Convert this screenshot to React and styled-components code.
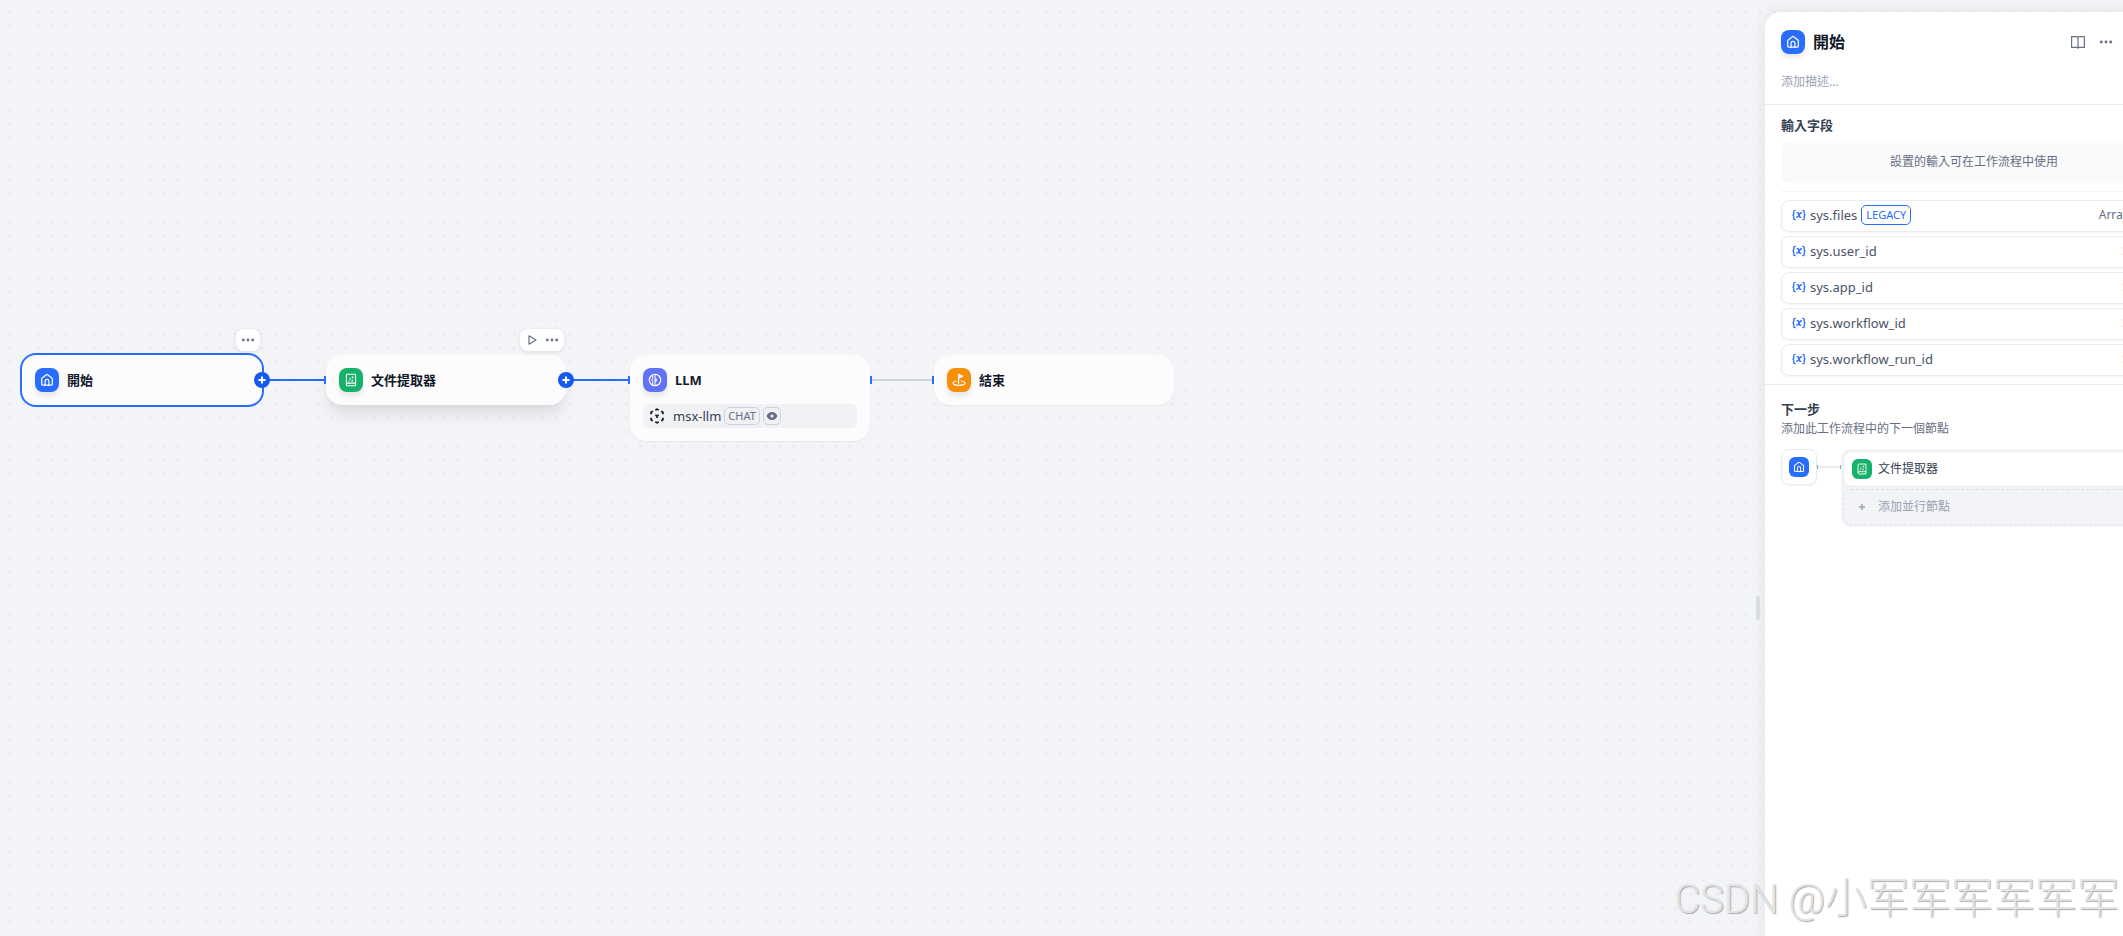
import React from 'react';
import styled, { createGlobalStyle, css } from 'styled-components';

const color = {
	canvas: '#f2f4f7',
	dot: '#e4e6eb',
	card: '#fcfcfd',
	blue: '#296dff',
	blueDark: '#155aef',
	green: '#17b26a',
	indigo: '#6172f3',
	orange: '#f79009',
	title: '#101828',
	secondary: '#354052',
	text: '#495464',
	muted: '#676f83',
	faint: '#98a2b2',
	line: '#e9ebf0',
};

const nodes = [
	{ id: 'start', name: '開始', icon: 'home', tone: color.blue, x: 20, y: 353, selected: true, menu: true, next: 'active' },
	{ id: 'doc', name: '文件提取器', icon: 'doc', tone: color.green, x: 326, y: 355, raised: true, menu: true, run: true, target: true, next: 'active' },
	{ id: 'llm', name: 'LLM', icon: 'llm', tone: color.indigo, x: 630, y: 355, model: 'msx-llm', target: true, next: 'idle' },
	{ id: 'end', name: '結束', icon: 'end', tone: color.orange, x: 934, y: 355, target: true },
];

const variables = [
	{ name: 'sys.files', type: 'Array[File]', legacy: true },
	{ name: 'sys.user_id', type: 'String' },
	{ name: 'sys.app_id', type: 'String' },
	{ name: 'sys.workflow_id', type: 'String' },
	{ name: 'sys.workflow_run_id', type: 'String' },
];

const HomeIcon = () => (
	<svg viewBox='0 0 14 14' fill='none' stroke='#fff' strokeWidth='1.2' strokeLinejoin='round' strokeLinecap='round'>
		<path d='M5.2 12.2H2.6a.9.9 0 0 1-.9-.9V5.8c0-.3.1-.6.4-.8L6.4 1.7a1 1 0 0 1 1.2 0L11.9 5c.3.2.4.5.4.8v5.5a.9.9 0 0 1-.9.9H8.8' />
		<path d='M5.1 12.2V8.3a1.9 1.9 0 0 1 3.8 0v3.9z' />
	</svg>
);

const DocIcon = () => (
	<svg viewBox='0 0 14 14' fill='none' stroke='#fff' strokeWidth='1.1' strokeLinejoin='round'>
		<path d='M2.4 11.5V2.4c0-.7.5-1.2 1.2-1.2h8v11.6H3.8c-.8 0-1.4-.6-1.4-1.300s.6-1.400 1.400-1.400h7.800' />
		<path d='M8.600 2.700l.5 1.100 1.100.5-1.100.5-.5 1.100-.5-1.100-1.100-.5 1.100-.5z' fill='#fff' stroke='none' />
		<circle cx='6' cy='5.800' r='.8' fill='#fff' stroke='none' />
		<circle cx='5' cy='7.900' r='.7' fill='#fff' stroke='none' />
		<circle cx='8.200' cy='7.700' r='.9' fill='#fff' stroke='none' />
	</svg>
);

const LlmIcon = () => (
	<svg viewBox='0 0 14 14' fill='none' stroke='#fff' strokeWidth='1.2' strokeLinejoin='round' strokeLinecap='round'>
		<circle cx='7' cy='7' r='5.700' />
		<path d='M7 2.300v9.400M4.700 3.200v2.300L3.900 7l.8 1.500v2.300' strokeWidth='1' />
		<path d='M7.200 5l2.300 1.200L8.500 7l1 .9-2.300 1.200z' fill='#fff' stroke='none' />
	</svg>
);

const EndIcon = () => (
	<svg viewBox='0 0 14 14' fill='none' stroke='#fff' strokeWidth='1.2' strokeLinejoin='round' strokeLinecap='round'>
		<path d='M6.600 10.300V1.300l4 1.900-4 2' />
		<path d='M7.200 1.800v3L10 3.300z' fill='#fff' stroke='none' />
		<path d='M4.700 8C2.600 8.300 1.100 9.100 1.100 10.100c0 1.300 2.600 2.300 5.900 2.300s5.900-1 5.900-2.300c0-1-1.500-1.800-3.800-2.100' />
	</svg>
);

const DotsIcon = () => (
	<svg width='16' height='16' viewBox='0 0 16 16' fill='currentColor'>
		<circle cx='3.300' cy='8' r='1.400' />
		<circle cx='8' cy='8' r='1.400' />
		<circle cx='12.700' cy='8' r='1.400' />
	</svg>
);

const PlayIcon = () => (
	<svg width='16' height='16' viewBox='0 0 16 16' fill='none' stroke='currentColor' strokeWidth='1.200' strokeLinejoin='round'>
		<path d='M5 3.800l7 4.200-7 4.200z' />
	</svg>
);

const PlusIcon = ({ size = 16, width = 2 }) => (
	<svg width={size} height={size} viewBox='0 0 16 16' fill='none' stroke='currentColor' strokeWidth={width}>
		<path d='M8 4.500v7M4.500 8h7' />
	</svg>
);

const BookIcon = () => (
	<svg width='16' height='16' viewBox='0 0 16 16' fill='none' stroke='currentColor' strokeWidth='1.200' strokeLinejoin='round'>
		<path d='M8 14.700V13.300H1.600V2.600H6.500C7.300 2.600 8 3.200 8 4v9.300h6.400V2.600H9.500C8.700 2.600 8 3.200 8 4' />
	</svg>
);

const VariableIcon = () => (
	<svg width='14' height='14' viewBox='0 0 14 14' fill='none' stroke='currentColor' strokeWidth='1.300' strokeLinecap='round' strokeLinejoin='round'>
		<path d='M3.200 2.300c-1 0-1.400.4-1.400 1.300v1.900c0 .8-.3 1.300-1 1.500.7.2 1 .7 1 1.500v1.900c0 .9.4 1.300 1.400 1.300M10.800 2.300c1 0 1.400.4 1.400 1.300v1.900c0 .8.3 1.300 1 1.500-.7.2-1 .7-1 1.500v1.900c0 .9-.4 1.300-1.400 1.300' />
		<path d='M5.200 4.700c1.300-.3 1.500.7 1.800 2.300s.6 2.600 1.700 2.300M9.400 4.700C8 4.600 6.300 9.400 4.700 9.300' strokeWidth='1.400' />
	</svg>
);

const ModelIcon = () => (
	<svg width='16' height='16' viewBox='0 0 16 16' fill='none' stroke='#101828' strokeWidth='1.700' strokeLinejoin='round'>
		<path d='M6.300 2L8 1.200 9.700 2M12.200 3.300l1.700 1v1.900M13.900 9.800v1.900l-1.700 1M9.700 14L8 14.800 6.300 14M3.800 12.700l-1.700-1V9.800M2.100 6.200V4.300l1.700-1M6.400 7.100L8 8l1.600-.9M8 8v1.900' />
	</svg>
);

const EyeIcon = () => (
	<svg width='12' height='12' viewBox='0 0 12 12'>
		<path d='M6 2C3.200 2 1.300 4.200.6 6c.7 1.800 2.600 4 5.400 4s4.700-2.200 5.400-4C10.700 4.200 8.800 2 6 2z' fill={color.muted} />
		<circle cx='6' cy='6' r='1.500' fill='#f2f4f7' />
	</svg>
);

const icons = { home: HomeIcon, doc: DocIcon, llm: LlmIcon, end: EndIcon };

const NodeIcon = ({ icon, tone, small }) => {
	const Icon = icons[icon];
	return (
		<IconBox $tone={tone} $small={small}>
			<Icon />
		</IconBox>
	);
};

const FlowNode = ({ node }) => (
	<Node $selected={node.selected} $raised={node.raised} style={{ left: node.x, top: node.y }}>
		{node.menu && (
			<NodeMenu>
				{node.run && (
					<IconButton aria-label='Run'>
						<PlayIcon />
					</IconButton>
				)}
				<IconButton aria-label='More'>
					<DotsIcon />
				</IconButton>
			</NodeMenu>
		)}
		<NodeHead>
			<NodeIcon icon={node.icon} tone={node.tone} />
			<NodeTitle>{node.name}</NodeTitle>
		</NodeHead>
		{node.model && (
			<Model>
				<ModelIcon />
				<span>{node.model}</span>
				<ModelTag>CHAT</ModelTag>
				<ModelTag $square>
					<EyeIcon />
				</ModelTag>
			</Model>
		)}
		{node.target && <Port />}
		{node.next && <Edge $active={node.next === 'active'} />}
		{node.next === 'idle' && <Port $right />}
		{node.next === 'active' && (
			<AddButton aria-label='Add node'>
				<PlusIcon />
			</AddButton>
		)}
	</Node>
);

const App = () => (
	<>
		<GlobalStyle />
		<Page>
			<Canvas>
				{nodes.map((node) => (
					<FlowNode key={node.id} node={node} />
				))}
			</Canvas>
			<ResizeHandle />
			<Panel>
				<PanelHead>
					<TitleRow>
						<NodeIcon icon='home' tone={color.blue} />
						<h1>開始</h1>
						<Actions>
							<IconButton aria-label='Help'>
								<BookIcon />
							</IconButton>
							<IconButton aria-label='More'>
								<DotsIcon />
							</IconButton>
						</Actions>
					</TitleRow>
					<Description aria-label='描述' placeholder='添加描述...' rows={1} />
				</PanelHead>
				<Fields>
					<h2>輸入字段</h2>
					<Hint>設置的輸入可在工作流程中使用</Hint>
					<VariableList>
						{variables.map((item) => (
							<Variable key={item.name}>
								<VariableIcon />
								<span>{item.name}</span>
								{item.legacy && <Legacy>LEGACY</Legacy>}
								<Type>{item.type}</Type>
							</Variable>
						))}
					</VariableList>
				</Fields>
				<NextStep>
					<h2>下一步</h2>
					<p>添加此工作流程中的下一個節點</p>
					<Steps>
						<StepOrigin>
							<NodeIcon icon='home' tone={color.blue} small />
						</StepOrigin>
						<StepLine />
						<StepGroup>
							<StepButton>
								<NodeIcon icon='doc' tone={color.green} small />
								文件提取器
							</StepButton>
							<StepButton $dashed>
								<PlusBox>
									<PlusIcon size={14} width={1.600} />
								</PlusBox>
								添加並行節點
							</StepButton>
						</StepGroup>
					</Steps>
				</NextStep>
			</Panel>
			<Watermark>
				<span>CSDN @</span>小军军军军军军
			</Watermark>
		</Page>
	</>
);

const GlobalStyle = createGlobalStyle`
	* {
		box-sizing: border-box;
	}
	body {
		margin: 0;
		color: ${color.text};
		font-family: 'Noto Sans', 'Noto Sans CJK TC', sans-serif;
		font-size: 13px;
		line-height: 16px;
	}
	h1, h2, p {
		margin: 0;
	}
	button, textarea {
		font: inherit;
		color: inherit;
	}
	svg {
		display: block;
		flex: none;
	}
`;

const Page = styled.div`
	position: relative;
	display: flex;
	min-height: 100vh;
	overflow: hidden;
	background-color: ${color.canvas};
	background-image: conic-gradient(from 90deg at 12px 12px, ${color.dot} 25%, transparent 0);
	background-position: -3px -1px;
	background-size: 14px 14px;
`;

const Canvas = styled.main`
	position: relative;
	flex: 1;
`;

const Node = styled.section`
	position: absolute;
	width: 240px;
	padding: 13px;
	border-radius: 16px;
	background: ${color.card};
	box-shadow: 0 1px 2px rgba(16, 24, 40, 0.06);
	${(props) =>
		props.$raised &&
		css`
			box-shadow: 0 12px 16px -4px rgba(16, 24, 40, 0.1), 0 4px 6px -2px rgba(16, 24, 40, 0.04);
		`}
	${(props) =>
		props.$selected &&
		css`
			width: 244px;
			border: 2px solid ${color.blue};
			box-shadow: none;
		`}
`;

const NodeHead = styled.div`
	display: flex;
	align-items: center;
	gap: 8px;
`;

const NodeTitle = styled.div`
	color: ${color.title};
	font-weight: 700;
`;

const IconBox = styled.span`
	display: flex;
	flex: none;
	align-items: center;
	justify-content: center;
	width: ${(props) => (props.$small ? 20 : 24)}px;
	height: ${(props) => (props.$small ? 20 : 24)}px;
	border-radius: ${(props) => (props.$small ? 6 : 8)}px;
	background: ${(props) => props.$tone};
	box-shadow: ${(props) => (props.$small ? 'none' : '0 4px 6px -1px rgba(16, 24, 40, 0.12)')};
	svg {
		width: ${(props) => (props.$small ? 12 : 14)}px;
		height: ${(props) => (props.$small ? 12 : 14)}px;
	}
`;

const NodeMenu = styled.div`
	position: absolute;
	right: 2px;
	bottom: 100%;
	display: flex;
	gap: 4px;
	margin-bottom: 4px;
	padding: 3px 4px;
	border-radius: 8px;
	background: #fff;
	box-shadow: 0 1px 4px rgba(16, 24, 40, 0.1);
`;

const IconButton = styled.button`
	padding: 0;
	border: 0;
	background: none;
	color: ${color.muted};
	cursor: pointer;
`;

const Port = styled.i`
	position: absolute;
	top: 21px;
	${(props) => (props.$right ? 'left: 100%;' : 'right: 100%;')}
	width: 2px;
	height: 8px;
	background: ${color.blue};
`;

const Edge = styled.i`
	position: absolute;
	top: 24px;
	left: 100%;
	width: 64px;
	height: 2px;
	background: ${(props) => (props.$active ? color.blue : '#d0d5dc')};
`;

const AddButton = styled.button`
	position: absolute;
	top: 17px;
	right: -8px;
	display: flex;
	align-items: center;
	justify-content: center;
	width: 16px;
	height: 16px;
	padding: 0;
	border: 0;
	border-radius: 50%;
	background: ${color.blueDark};
	color: #fff;
	cursor: pointer;
`;

const Model = styled.div`
	display: flex;
	align-items: center;
	gap: 3px;
	height: 24px;
	margin-top: 12px;
	padding: 0 6px;
	border-radius: 6px;
	background: #f0f1f4;
	span {
		color: ${color.secondary};
	}
	svg + span {
		margin-left: 5px;
	}
`;

const ModelTag = styled.em`
	display: flex;
	align-items: center;
	justify-content: center;
	width: ${(props) => (props.$square ? '18px' : 'auto')};
	height: 18px;
	padding: ${(props) => (props.$square ? 0 : '0 3px')};
	border: 1px solid #cfd3da;
	border-radius: 5px;
	color: ${color.muted};
	font-size: 11px;
	font-style: normal;
`;

const ResizeHandle = styled.div`
	width: 4px;
	height: 24px;
	margin: calc(65vh - 12px) 5px 0 0;
	border-radius: 2px;
	background: #dcdfe5;
`;

/* wider than the room left for it, so its right side runs out of the page */
const Panel = styled.aside`
	flex: none;
	width: 418px;
	margin: 12px -60px 0 0;
	border-radius: 16px 0 0 0;
	background: #fff;
	box-shadow: 0 0 16px rgba(16, 24, 40, 0.08);
	h2 {
		color: ${color.secondary};
		font-size: 13px;
		font-weight: 700;
		line-height: 20px;
	}
`;

const PanelHead = styled.header`
	padding: 16px 16px 12px;
	border-bottom: 1px solid ${color.line};
`;

const TitleRow = styled.div`
	display: flex;
	align-items: center;
	gap: 8px;
	height: 28px;
	h1 {
		color: ${color.title};
		font-size: 16px;
		line-height: 24px;
	}
`;

const Actions = styled.div`
	display: flex;
	gap: 12px;
	margin-left: auto;
	padding-right: 53px;
`;

const Description = styled.textarea`
	display: block;
	width: 100%;
	height: 20px;
	margin-top: 16px;
	padding: 0;
	border: 0;
	outline: 0;
	resize: none;
	overflow: hidden;
	font-size: 12px;
	line-height: 20px;
	&::placeholder {
		color: ${color.faint};
	}
`;

const Fields = styled.section`
	padding: 10px 16px 8px;
`;

const Hint = styled.p`
	margin-top: 6px;
	padding: 13px;
	border-radius: 8px;
	background: #f9fafb;
	color: ${color.muted};
	font-size: 12px;
	text-align: center;
`;

const VariableList = styled.ul`
	display: grid;
	gap: 4px;
	margin: 8px 0 0;
	padding: 8px 0 0;
	border-top: 1px solid #f2f4f7;
	list-style: none;
`;

const Variable = styled.li`
	display: flex;
	align-items: center;
	gap: 4px;
	height: 32px;
	padding: 0 10px 2px;
	border: 1px solid ${color.line};
	border-radius: 8px;
	box-shadow: 0 1px 2px rgba(16, 24, 40, 0.05);
	svg {
		color: ${color.blue};
	}
`;

const Legacy = styled.span`
	padding: 1px 4px;
	border: 1px solid ${color.blue};
	border-radius: 5px;
	color: ${color.blue};
	font-size: 11px;
`;

const Type = styled.span`
	margin-left: auto;
	color: ${color.muted};
	font-size: 12px;
`;

const NextStep = styled.section`
	padding: 14px 16px;
	border-top: 1px solid ${color.line};
	p {
		color: ${color.muted};
		font-size: 12px;
		line-height: 20px;
	}
`;

const Steps = styled.div`
	display: flex;
	align-items: flex-start;
	margin-top: 10px;
`;

const StepOrigin = styled.div`
	padding: 7px;
	border: 1px solid ${color.line};
	border-radius: 8px;
	box-shadow: 0 1px 2px rgba(16, 24, 40, 0.05);
`;

const StepLine = styled.div`
	width: 24px;
	height: 4px;
	margin-top: 16px;
	border: solid ${color.faint};
	border-width: 0 1px;
	background: linear-gradient(${color.line}, ${color.line}) center / 100% 2px no-repeat;
`;

const StepGroup = styled.div`
	display: grid;
	flex: 1;
	gap: 2px;
	padding: 2px;
	border-radius: 10px;
	background: ${color.canvas};
`;

const StepButton = styled.button`
	display: flex;
	align-items: center;
	gap: 6px;
	height: 36px;
	padding: 0 8px;
	border: 1px ${(props) => (props.$dashed ? 'dashed #dcdfe5' : `solid ${color.line}`)};
	border-radius: 8px;
	background: ${(props) => (props.$dashed ? 'transparent' : '#fff')};
	color: ${(props) => (props.$dashed ? color.faint : color.secondary)};
	font-size: 12px;
	cursor: pointer;
`;

const PlusBox = styled.span`
	display: flex;
	justify-content: center;
	width: 20px;
`;

const Watermark = styled.div`
	position: absolute;
	right: 4px;
	bottom: 8px;
	color: #e2e3e5;
	font-family: 'Noto Sans CJK SC', sans-serif;
	font-size: 42px;
	font-weight: 300;
	line-height: 56px;
	text-shadow: 1px 1px 1px #a9abae;
	pointer-events: none;
	span {
		font-family: Roboto, sans-serif;
		font-size: 40px;
	}
`;

export default App;
